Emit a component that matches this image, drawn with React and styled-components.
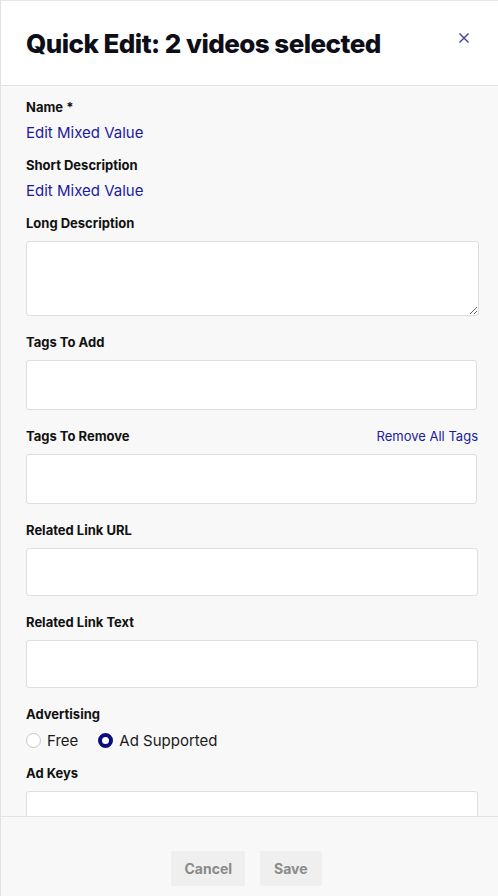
import React, { useState } from 'react';
import styled, { createGlobalStyle } from 'styled-components';

const Global = createGlobalStyle`
  html, body { margin: 0; padding: 0; background: #fff; }
  body { font-family: "Inter", "Noto Sans", sans-serif; }
  * { box-sizing: border-box; }
`;

const Panel = styled.div`
  width: 498px; height: 896px;
  display: flex; flex-direction: column;
  border-left: 1px solid #e2e2e2;
  background: #f8f8f8;
`;
const Header = styled.header`
  height: 86px; flex-shrink: 0;
  display: flex; align-items: center; justify-content: space-between;
  padding: 0 28px 0 25px;
  background: #fff;
  border-top: 1px solid #e6e6ee;
  border-bottom: 1px solid #e0e0e0;
`;
const Title = styled.h1`
  margin: 0; font-size: 26px; font-weight: 800;
  color: #0e0e18; letter-spacing: -0.55px;
`;
const Close = styled.button`
  border: none; background: none; padding: 0; cursor: pointer;
  display: flex; width: 12px; height: 12px; margin-top: -10px;
`;
const Body = styled.div`
  flex: 1; overflow: hidden;
  padding: 12px 20px 0 25px;
  display: flex; flex-direction: column;
`;
const Field = styled.div`
  display: flex; flex-direction: column;
  margin-bottom: ${({ $mb }) => $mb ?? 17}px;
`;
const LabelRow = styled.div`
  display: flex; justify-content: space-between; align-items: center;
  height: 18px; margin-bottom: ${({ $mb }) => $mb ?? 9}px;
`;
const Label = styled.label`
  font-size: 13px; font-weight: 700; color: #111;
`;
const LinkText = styled.a`
  font-size: ${({ $size }) => $size || 15}px; color: #1b1ba0;
  text-decoration: none; cursor: pointer; line-height: 20px;
`;
const Input = styled.input`
  width: ${({ $w }) => $w || 452}px; height: ${({ $h }) => $h || 50}px;
  border: 1px solid #dedede; border-radius: 3px; background: #fff;
  padding: 0 10px; font: inherit; outline: none;
`;
const TextArea = styled.textarea`
  width: 453px; height: 75px; resize: vertical;
  border: 1px solid #dedede; border-radius: 3px; background: #fff;
  padding: 8px 10px; font: inherit; outline: none; display: block;
`;
const Radios = styled.div`
  display: flex; align-items: center; gap: 20px; height: 20px;
  margin-bottom: 14px;
`;
const RadioOption = styled.label`
  display: flex; align-items: center; gap: 6px;
  font-size: 15px; color: #1a1a1a; cursor: pointer;
`;
const Dot = styled.span`
  width: 15px; height: 15px; border-radius: 50%;
  border: ${({ $on }) => ($on ? '4px solid #0b0b80' : '1px solid #c8c8c8')};
  background: #fff; display: inline-block;
`;
const Footer = styled.footer`
  height: 80px; flex-shrink: 0;
  border-top: 1px solid #e2e2e2;
  display: flex; justify-content: center; align-items: flex-end;
  gap: 15px; padding-bottom: 10px; padding-right: 6px;
`;
const Button = styled.button`
  height: 35px; padding: 0 ${({ $px }) => $px || 13}px;
  border: none; border-radius: 2px; background: #efefef;
  color: #8a8a8a; font: inherit; font-size: 14px; font-weight: 700;
  cursor: default;
`;

export default function App() {
  const [ad, setAd] = useState('supported');

  return (
    <Panel>
      <Global />
      <Header>
        <Title>Quick Edit: 2 videos selected</Title>
        <Close aria-label="Close">
          <svg width="12" height="12" viewBox="0 0 12 12">
            <path d="M1.5 1.5l9 9M10.5 1.5l-9 9" stroke="#3d3bab" strokeWidth="1.4" />
          </svg>
        </Close>
      </Header>
      <Body>
        <Field $mb={13}>
          <LabelRow $mb={7}><Label>Name *</Label></LabelRow>
          <LinkText>Edit Mixed Value</LinkText>
        </Field>
        <Field $mb={13}>
          <LabelRow $mb={7}><Label>Short Description</Label></LabelRow>
          <LinkText>Edit Mixed Value</LinkText>
        </Field>
        <Field>
          <LabelRow><Label>Long Description</Label></LabelRow>
          <TextArea />
        </Field>
        <Field>
          <LabelRow><Label>Tags To Add</Label></LabelRow>
          <Input $w={451} />
        </Field>
        <Field>
          <LabelRow>
            <Label>Tags To Remove</Label>
            <LinkText $size={13}>Remove All Tags</LinkText>
          </LabelRow>
          <Input $w={451} />
        </Field>
        <Field>
          <LabelRow><Label>Related Link URL</Label></LabelRow>
          <Input $h={48} />
        </Field>
        <Field>
          <LabelRow><Label>Related Link Text</Label></LabelRow>
          <Input $h={48} />
        </Field>
        <Field $mb={0}>
          <LabelRow $mb={7}><Label>Advertising</Label></LabelRow>
          <Radios>
            <RadioOption onClick={() => setAd('free')}>
              <Dot $on={ad === 'free'} />Free
            </RadioOption>
            <RadioOption onClick={() => setAd('supported')}>
              <Dot $on={ad === 'supported'} />Ad Supported
            </RadioOption>
          </Radios>
        </Field>
        <Field>
          <LabelRow><Label>Ad Keys</Label></LabelRow>
          <Input $h={48} />
        </Field>
      </Body>
      <Footer>
        <Button>Cancel</Button>
        <Button $px={14}>Save</Button>
      </Footer>
    </Panel>
  );
}
